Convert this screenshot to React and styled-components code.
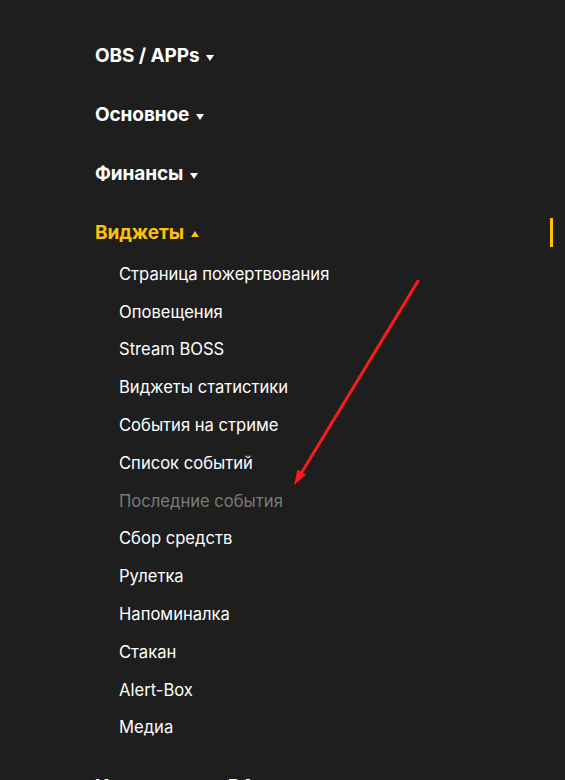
import React from "react";
import styled, { createGlobalStyle } from "styled-components";

const GlobalStyle = createGlobalStyle`
  body {
    margin: 0;
    background: #1e1e1e;
    font-family: Inter, "Noto Sans", sans-serif;
  }
`;

const Page = styled.div`
  position: relative;
  height: 780px;
  overflow: hidden;
  background: #1e1e1e;
`;

const Nav = styled.nav`
  display: flex;
  flex-direction: column;
  padding: 41px 12px 0 95px;
`;

const Section = styled.div`
  display: flex;
  flex-direction: column;
  margin-bottom: ${(p) => (p.$open ? "26px" : "30px")};
`;

const Heading = styled.div`
  display: flex;
  align-items: center;
  gap: 7px;
  height: 29px;
  font-size: 19px;
  font-weight: 700;
  letter-spacing: -0.1px;
  color: ${(p) => (p.$active ? "#ffc107" : "#ffffff")};
  border-right: 3px solid ${(p) => (p.$active ? "#ffc107" : "transparent")};
  cursor: pointer;
`;

const Caret = styled.span`
  width: 0;
  height: 0;
  margin-top: 4px;
  border-left: 4px solid transparent;
  border-right: 4px solid transparent;
  ${(p) =>
    p.$up
      ? `border-bottom: 6px solid #ffc107; margin-top: 2px;`
      : `border-top: 6px solid #ffffff;`}
`;

const SubList = styled.ul`
  list-style: none;
  margin: 8px 0 0;
  padding: 0 0 0 24px;
`;

const SubItem = styled.li`
  height: 37.8px;
  display: flex;
  align-items: center;
  font-size: 16.6px;
  color: ${(p) => (p.$muted ? "#7a7a7a" : "#ffffff")};
`;

const Annotation = styled.svg`
  position: absolute;
  left: 0;
  top: 0;
  pointer-events: none;
`;

const widgets = [
  "Страница пожертвования",
  "Оповещения",
  "Stream BOSS",
  "Виджеты статистики",
  "События на стриме",
  "Список событий",
  "Последние события",
  "Сбор средств",
  "Рулетка",
  "Напоминалка",
  "Стакан",
  "Alert-Box",
  "Медиа",
];

const App = () => {
  return (
    <Page>
      <GlobalStyle />
      <Nav>
        <Section>
          <Heading>
            OBS / APPs <Caret />
          </Heading>
        </Section>
        <Section>
          <Heading>
            Основное <Caret />
          </Heading>
        </Section>
        <Section>
          <Heading>
            Финансы <Caret />
          </Heading>
        </Section>
        <Section $open>
          <Heading $active>
            Виджеты <Caret $up />
          </Heading>
          <SubList>
            {widgets.map((w) => (
              <SubItem key={w} $muted={w === "Последние события"}>
                {w}
              </SubItem>
            ))}
          </SubList>
        </Section>
        <Section>
          <Heading>
            Интеграция с DA <Caret />
          </Heading>
        </Section>
      </Nav>
      <Annotation width="565" height="780" viewBox="0 0 565 780">
        <line x1="418" y1="281" x2="302" y2="472" stroke="#ff1a1a" strokeWidth="3" strokeLinecap="round" />
        <polygon points="294,485 297.5,469.6 306.1,474.8" fill="#ff1a1a" />
      </Annotation>
    </Page>
  );
};

export default App;
